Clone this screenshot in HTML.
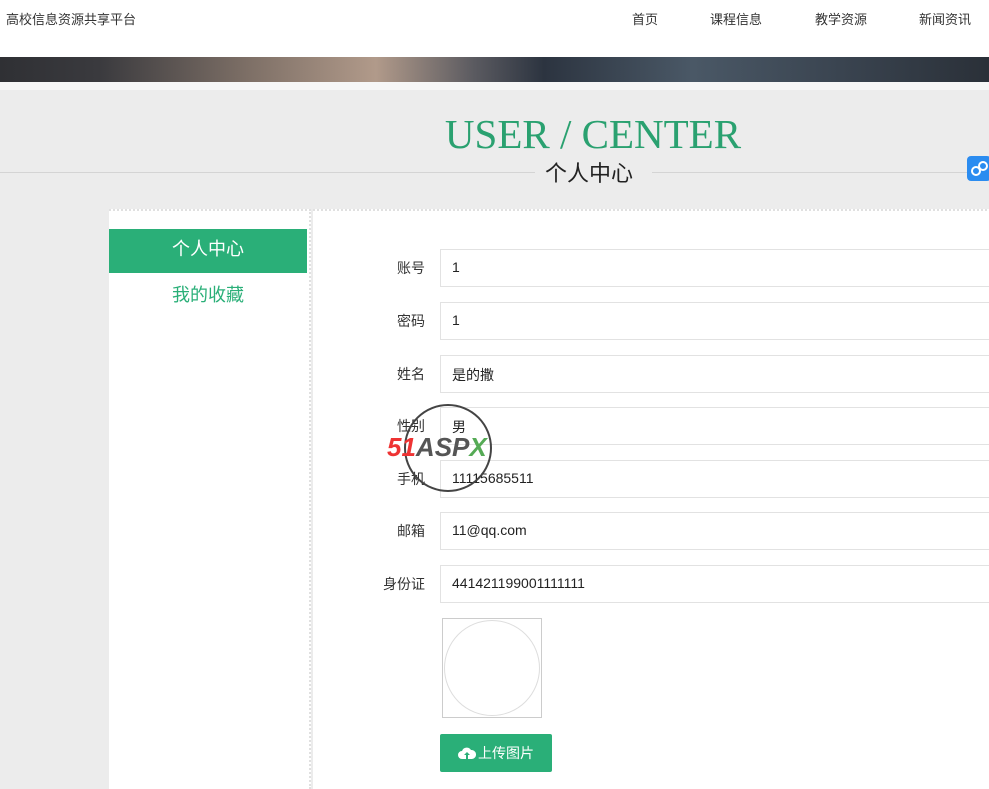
<!DOCTYPE html>
<html><head><meta charset="utf-8"><style>
*{margin:0;padding:0;box-sizing:border-box}
body{width:989px;height:780px;overflow:hidden;background:#ececec;font-family:"Liberation Sans","Noto Sans CJK SC",sans-serif;position:relative}
.hdr{position:absolute;left:0;top:0;width:989px;height:57px;background:#fff}
.logo{position:absolute;left:6px;top:9px;font-size:13px;color:#333}
.nav{position:absolute;top:9px;font-size:13px;color:#333}
.banner{position:absolute;left:0;top:57px;width:989px;height:25px;background:linear-gradient(90deg,#2f3034 0%,#3a3a3e 10%,#7d6f66 25%,#b19a8a 38%,#5a5a60 48%,#2c3440 55%,#4a5866 70%,#3a4450 85%,#2a3038 100%)}
.strip{position:absolute;left:0;top:82px;width:989px;height:8px;background:#f6f6f6}
.t1{position:absolute;left:0;width:1186px;text-align:center;top:110px;font-family:"Liberation Serif",serif;font-size:41px;color:#2aa170}
.line{position:absolute;top:172px;height:1px;background:#d4d4d4}
.t2{position:absolute;left:545px;top:156px;font-size:22px;color:#222}
.side{position:absolute;left:109px;top:209px;width:202px;height:580px;background:#fff;border-top:2px dotted #e0e0e0;border-right:2px dotted #e0e0e0}
.main{position:absolute;left:313px;top:209px;width:690px;height:580px;background:#fff;border-top:2px dotted #e0e0e0}
.act{position:absolute;left:109px;top:229px;width:198px;height:44px;background:#2aaf78;color:#fff;font-size:18px;text-align:center;line-height:41px}
.fav{position:absolute;left:109px;top:281px;width:198px;text-align:center;color:#2aaf78;font-size:18px}
.lb{position:absolute;width:100px;left:325px;text-align:right;font-size:14px;color:#333}
.in{position:absolute;left:440px;width:560px;height:38px;border:1px solid #e2e2e2;background:#fff;font-size:14px;color:#222;padding:9px 0 0 11px}
.img{position:absolute;left:442px;top:618px;width:100px;height:100px;border:1px solid #ccc}
.circ{position:absolute;left:1px;top:1px;width:96px;height:96px;border:1px solid #ddd;border-radius:50%}
.btn{position:absolute;left:440px;top:734px;width:112px;height:38px;background:#2aaf78;border-radius:2px;color:#fff;font-size:14px;line-height:38px;padding-left:38px}
.share{position:absolute;left:967px;top:156px;width:24px;height:25px;background:#2b8cf0;border-radius:4px}
</style></head><body>
<div class="hdr"></div>
<div class="logo">高校信息资源共享平台</div>
<div class="nav" style="left:632px">首页</div>
<div class="nav" style="left:710px">课程信息</div>
<div class="nav" style="left:815px">教学资源</div>
<div class="nav" style="left:919px">新闻资讯</div>
<div class="banner"></div><div class="strip"></div>
<div class="t1">USER / CENTER</div>
<div class="line" style="left:0;width:535px"></div>
<div class="line" style="left:652px;width:337px"></div>
<div class="t2">个人中心</div>
<div class="share"><svg width="24" height="25"><circle cx="9" cy="15" r="4" fill="none" stroke="#fff" stroke-width="2"/><circle cx="16" cy="10" r="4" fill="none" stroke="#fff" stroke-width="2"/></svg></div>
<div class="side"></div><div class="main"></div>
<div class="act">个人中心</div>
<div class="fav">我的收藏</div>
<div class="lb" style="top:258px">账号</div><div class="in" style="top:249px">1</div>
<div class="lb" style="top:311px">密码</div><div class="in" style="top:302px">1</div>
<div class="lb" style="top:364px">姓名</div><div class="in" style="top:355px">是的撒</div>
<div class="lb" style="top:416px">性别</div><div class="in" style="top:407px">男</div>
<div class="lb" style="top:469px">手机</div><div class="in" style="top:460px">11115685511</div>
<div class="lb" style="top:521px">邮箱</div><div class="in" style="top:512px">11@qq.com</div>
<div class="lb" style="top:574px">身份证</div><div class="in" style="top:565px">441421199001111111</div>
<div class="img"><div class="circ"></div></div>
<div style="position:absolute;left:404px;top:404px;width:88px;height:88px;border:2px solid #444;border-radius:50%"></div>
<div style="position:absolute;left:387px;top:432px;font:italic bold 26px 'Liberation Sans',sans-serif;color:#e33"><span>51</span><span style="color:#555">ASP</span><span style="color:#5a5">X</span></div>
<div class="btn"><svg style="position:absolute;left:18px;top:12px" width="18" height="14"><path d="M4 13a4 4 0 0 1 0-8 5 5 0 0 1 9-1 4 4 0 0 1 1 9z" fill="#fff"/><path d="M9 6l-3 3h2v4h2V9h2z" fill="#2aaf78"/></svg>上传图片</div>
</body></html>
